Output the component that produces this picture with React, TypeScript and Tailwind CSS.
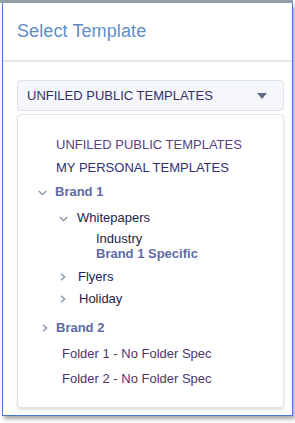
import React from "react";

const ChevronDown: React.FC<{ className?: string }> = ({ className }) => (
  <svg className={className} width="9" height="6" viewBox="0 0 9 6" fill="none">
    <path d="M0.8 1L4.5 4.6L8.2 1" stroke="#8492a8" strokeWidth="1.3" />
  </svg>
);

const ChevronRight: React.FC<{ className?: string }> = ({ className }) => (
  <svg className={className} width="6" height="8" viewBox="0 0 6 8" fill="none">
    <path d="M1 0.7L4.7 4L1 7.3" stroke="#8492a8" strokeWidth="1.3" />
  </svg>
);

const App: React.FC = () => {
  return (
    <div
      className="w-[295px] h-[423px] bg-white overflow-hidden"
      style={{ fontFamily: "Arial, 'Liberation Sans', sans-serif" }}
    >
      <div className="h-[3px] w-[293px] bg-[#949fae]" />
      <div className="ml-[2px] w-[291px] h-[413px] border-x border-b border-[#4a78d2] bg-white shadow-[2px_3px_4px_rgba(0,0,0,0.35)] flex flex-col">
        <div className="h-[57px] flex items-center pl-[14px]">
          <h1 className="text-[18px] font-light text-[#5f8dc8] tracking-[0.1px]">
            Select Template
          </h1>
        </div>
        <div className="h-[2px] bg-[#e1e5ec]" />

        <div className="pl-[14px] pr-[8px] pt-[18px]">
          <div className="h-[31px] rounded-[4px] border border-[#dde1e8] bg-[#f4f6f9] flex items-center justify-between pl-[9px] pr-[16px]">
            <span className="text-[13px] text-[#35306a]">UNFILED PUBLIC TEMPLATES</span>
            <svg width="10" height="6" viewBox="0 0 10 6">
              <path d="M0 0H10L5 6Z" fill="#5f6b86" />
            </svg>
          </div>

          <div className="mt-[3px] h-[294px] rounded-[4px] border border-[#e0e3ea] bg-white shadow-[0_2px_3px_rgba(0,0,0,0.12)] pt-[18px] text-[13px]">
            <div className="h-[23px] flex items-center pl-[38px] text-[#5a3f7f]">
              UNFILED PUBLIC TEMPLATES
            </div>
            <div className="h-[23px] flex items-center pl-[38px] text-[#33306f]">
              MY PERSONAL TEMPLATES
            </div>
            <div className="h-[26px] flex items-center pl-[20px] font-bold text-[#5f6aa8]">
              <ChevronDown className="mt-[2px]" />
              <span className="ml-[8px]">Brand 1</span>
            </div>
            <div className="h-[26px] flex items-center pl-[41px] text-[#24244a]">
              <ChevronDown className="mt-[2px]" />
              <span className="ml-[9px]">Whitepapers</span>
            </div>
            <div className="h-[15px] flex items-center pl-[78px] text-[#24244a]">
              Industry
            </div>
            <div className="h-[15px] flex items-center pl-[78px] font-bold text-[#5f6aa8]">
              Brand 1 Specific
            </div>
            <div className="mt-[5px] h-[22px] flex items-center pl-[42px] text-[#24244a]">
              <ChevronRight />
              <span className="ml-[12px]">Flyers</span>
            </div>
            <div className="h-[22px] flex items-center pl-[42px] text-[#24244a]">
              <ChevronRight />
              <span className="ml-[13px]">Holiday</span>
            </div>
            <div className="mt-[7px] h-[22px] flex items-center pl-[24px] font-bold text-[#5f6aa8]">
              <ChevronRight />
              <span className="ml-[8px]">Brand 2</span>
            </div>
            <div className="mt-[4px] h-[22px] flex items-center pl-[44px] text-[#52336a]">
              Folder 1 - No Folder Spec
            </div>
            <div className="mt-[3px] h-[22px] flex items-center pl-[44px] text-[#52336a]">
              Folder 2 - No Folder Spec
            </div>
          </div>
        </div>
      </div>
    </div>
  );
};

export default App;
